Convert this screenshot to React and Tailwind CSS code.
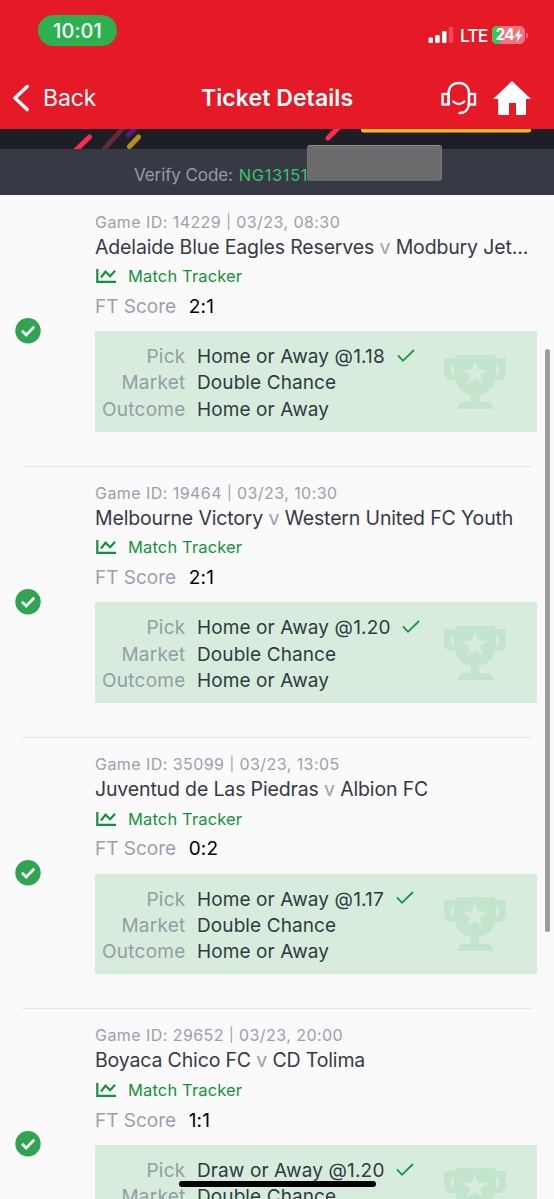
const games = [
  { id: '14229', time: '03/23, 08:30', home: 'Adelaide Blue Eagles Reserves', away: 'Modbury Jet...', score: '2:1', pick: 'Home or Away', odds: '@1.18', outcome: 'Home or Away' },
  { id: '19464', time: '03/23, 10:30', home: 'Melbourne Victory', away: 'Western United FC Youth', score: '2:1', pick: 'Home or Away', odds: '@1.20', outcome: 'Home or Away' },
  { id: '35099', time: '03/23, 13:05', home: 'Juventud de Las Piedras', away: 'Albion FC', score: '0:2', pick: 'Home or Away', odds: '@1.17', outcome: 'Home or Away' },
  { id: '29652', time: '03/23, 20:00', home: 'Boyaca Chico FC', away: 'CD Tolima', score: '1:1', pick: 'Draw or Away', odds: '@1.20', outcome: 'Draw or Away' },
];

function StatusBar() {
  return (
    <div className="flex h-[66px] items-start justify-between pl-[38px] pr-[26px]">
      <div className="mt-[15px] flex h-[31px] w-[79px] items-center justify-center rounded-full bg-[#2cb150] text-[20px] font-medium tracking-[0.1px] text-white">10:01</div>
      <div className="mt-[26px] flex h-[18px] items-center">
        <svg width="26" height="18" viewBox="0 0 26 18" fill="#fff">
          <rect x="0.5" y="11.5" width="4.5" height="5.5" rx="1.2" />
          <rect x="7.2" y="9" width="4.5" height="8" rx="1.2" />
          <rect x="14" y="5" width="4.5" height="12" rx="1.2" />
          <rect x="20.8" y="1" width="4.5" height="16" rx="1.2" opacity=".22" />
        </svg>
        <span className="mt-px ml-[6px] w-[26px] text-[17.500px] leading-[18px] font-medium tracking-[-1px] text-white">LTE</span>
        <div className="relative ml-[6px] flex h-[18px] w-[33px] items-center overflow-hidden rounded-[5px] bg-[#f07480]">
          <div className="absolute inset-y-0 left-0 w-[8px] bg-[#34c759]" />
          <span className="relative ml-[3.500px] text-[15.500px] font-bold tracking-[-0.700px] text-white">24</span>
          <svg className="relative" width="9" height="13" viewBox="0 0 9 13" fill="#fff"><path d="M6 0 .5 7.2h3.2L2.8 13 8.6 5.6H5.2z" /></svg>
        </div>
        <div className="ml-[1px] h-[5px] w-[2px] rounded-r-full bg-[#f07480]" />
      </div>
    </div>
  );
}

function NavBar() {
  return (
    <div className="grid h-[63px] grid-cols-[201px_1fr_113px] items-center text-white">
      <div className="flex items-center pl-[13px]">
        <svg width="17" height="28" viewBox="0 0 17 28" fill="none" stroke="#fff" strokeWidth="3.4" strokeLinecap="round" strokeLinejoin="round"><path d="M14.2 2.5 2 14l12.200 11.600" /></svg>
        <span className="mt-[2px] ml-[13px] text-[23px] tracking-[-0.100px]">Back</span>
      </div>
      <h1 className="mt-[2px] text-[23px] font-semibold tracking-[0.080px] whitespace-nowrap">Ticket Details</h1>
      <div className="flex items-center">
        <svg width="36" height="34" viewBox="0 0 36 34" fill="none" stroke="#fff" strokeWidth="2.3">
          <rect x="1.6" y="13" width="6" height="10.5" />
          <rect x="28" y="13" width="6" height="10.5" />
          <path d="M7.6 22V12C7.6 5.7 12 2 17.8 2S28 5.7 28 12v9.500c0 7-4 10.500-9.500 10.500" strokeLinecap="round" />
          <path d="M12.3 20.5c3 3.4 8 3.4 11 0" strokeLinecap="round" />
        </svg>
        <svg className="ml-[16px]" width="38" height="34" viewBox="0 0 38 34" fill="#fff"><path d="M19 0 38 18h-5v16H23V22h-7v12H5.200V18H0z" /></svg>
      </div>
    </div>
  );
}

function Banner() {
  return (
    <svg className="block h-[20px] w-full bg-[#1d1e26]" viewBox="0 0 554 20" fill="none" strokeLinecap="round">
      <path d="M75 22 89.500 8" stroke="#fc2c50" strokeWidth="5" />
      <path d="M105 19 125 -3" stroke="#652a38" strokeWidth="5" />
      <path d="M128 6 137 -3" stroke="#591b77" strokeWidth="5" />
      <path d="M129.500 17.500 138.500 8" stroke="#b88d15" strokeWidth="5" />
      <path d="M328 9 342 -5" stroke="#fc2c50" strokeWidth="5" />
      <path d="M361 0h170v1a2.500 2.500 0 0 1-2.500 2.500h-165A2.500 2.500 0 0 1 361 1z" fill="#f7b92a" />
      <path d="M368 17.500h3" stroke="#b88d15" strokeWidth="3" />
    </svg>
  );
}

function Trophy() {
  return (
    <svg width="64" height="56" viewBox="0 0 64 56" fill="#c3e5cd">
      <path fillRule="evenodd" d="M12 1h40v3h11v14c0 5-3 8-8 8h-3c-2 8-7 13-15.500 15v7H45c2 0 3 1 4 3l1.500 4h-36l1.500-4c1-2 2-3 4-3h7.500v-7C19 39 14 34 12 26H9c-5 0-8-3-8-8V4h11zM8 12v6c0 2 1 2.500 3 2.500V11c-2 0-3 0-3 1zM53 11v9.500c2 0 3-.5 3-2.500v-6c0-1-1-1-3-1z" />
      <path fill="#d8ecdd" d="m32 6.500 3 9.200h9.700l-7.800 5.700 3 9.200-7.900-5.700-7.900 5.700 3-9.200-7.800-5.700H29z" />
    </svg>
  );
}

function Row({ label, children }) {
  return (
    <div className="flex h-[26.4px] items-center">
      <span className="w-[90.500px] text-right tracking-[0.250px] text-[#969da5]">{label}</span>
      <span className="ml-[11.500px] flex items-center tracking-[0.100px] text-[#2f3b40]">{children}</span>
    </div>
  );
}

function Game({ game }) {
  return (
    <article className="flex h-[271.330px] shrink-0">
      <div className="w-[95px] shrink-0 pt-[123px] pl-[15px]">
        <svg width="26" height="26" viewBox="0 0 26 26"><circle cx="13" cy="12.700" r="12.700" fill="#31a452" /><path d="m7 12.700 4.200 4.300L19.200 8.700" fill="none" stroke="#f4faf5" strokeWidth="2.700" /></svg>
      </div>
      <div className="w-[442px] pt-[16px]">
        <p className="h-[23px] text-[16px] leading-[23px] tracking-[0.440px] text-[#9ca0ab]">Game ID: {game.id} <span className="relative -top-px text-[14px]">|</span> {game.time}</p>
        <h2 className="h-[26px] text-[19.500px] leading-[26px] tracking-[-0.150px] whitespace-nowrap text-[#353a45]">{game.home} <span className="text-[#9ca0ab]">v</span> {game.away}</h2>
        <div className="mt-[2px] flex h-[29px] items-center text-[#119438]">
          <svg width="22" height="16" viewBox="0 0 22 16" fill="none" stroke="currentColor" strokeWidth="2.200"><path d="M2.300 1v12.900H21M6 9.500l4.500-5.800 4.600 4.500 5-5.500" /></svg>
          <span className="mt-[1px] ml-[11px] text-[16.500px] tracking-[0.140px]">Match Tracker</span>
        </div>
        <p className="mt-[2px] flex h-[29px] items-center text-[19px] text-[#9ca0ab]">FT Score <span className="ml-[12.500px] tracking-[0.200px] text-black">{game.score}</span></p>
        <div className="mt-[9.500px] flex h-[100.500px] justify-between bg-[#d8ecdd] pt-[13px] text-[19px]">
          <div>
            <Row label="Pick">
              {game.pick}<span className="ml-[5.500px] tracking-[0.200px]">{game.odds}</span>
              <svg className="mb-[3px] ml-[11.500px]" width="18" height="14" viewBox="0 0 18 14" fill="none" stroke="#109843" strokeWidth="1.800"><path d="m1 6.300 5 5.500L17 1" /></svg>
            </Row>
            <Row label="Market">Double Chance</Row>
            <Row label="Outcome">{game.outcome}</Row>
          </div>
          <div className="mt-[9.500px] mr-[30.500px]"><Trophy /></div>
        </div>
        <div className="mt-[34px] -ml-[73px] h-px w-[510px] bg-[#e5e6ee]" />
      </div>
    </article>
  );
}

export default function App() {
  return (
    <div className="relative flex h-[1199px] w-[554px] flex-col overflow-hidden bg-[#fafafb] font-['Inter',sans-serif]">
      <header className="h-[129px] shrink-0 bg-[#e61927]">
        <StatusBar />
        <NavBar />
      </header>
      <div className="shrink-0"><Banner /></div>
      <div className="flex h-[45.500px] shrink-0 items-center bg-[#373a45] pt-[7px] pl-[134px] text-[17px]">
        <span className="tracking-[-0.100px] text-[#969aa5]">Verify Code:</span>
        <span className="ml-[6px] text-[16.500px] tracking-[0.600px] text-[#3ac26c]">NG13151</span>
      </div>
      <main className="flex min-h-0 flex-1 flex-col overflow-hidden">
        {games.map((game) => <Game key={game.id} game={game} />)}
      </main>
      <div className="absolute top-[145px] left-[307px] h-[36px] w-[135px] rounded-[3px] border border-t-[#8a8a8f] border-r-[#77777b] border-b-[#646469] border-l-[#727276] bg-[#6b6b6b]" />
      <div className="absolute top-[349px] left-[545px] h-[583px] w-[5px] rounded-full bg-[#9c9c9e]" />
      <div className="absolute top-[1181px] left-[179px] h-[6px] w-[197px] rounded-full bg-black" />
    </div>
  );
}
